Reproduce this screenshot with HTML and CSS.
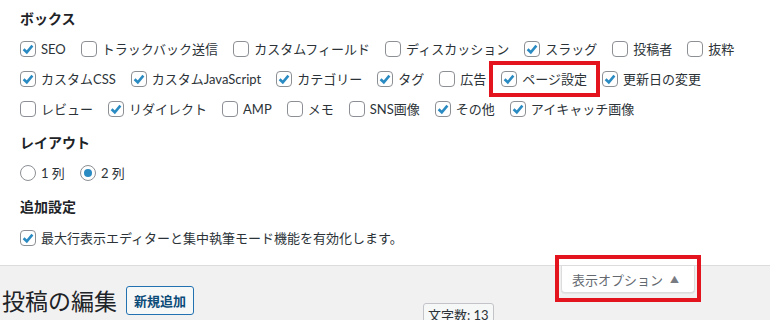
FILE: index.html
```html
<!DOCTYPE html>
<html lang="ja">
<head>
<meta charset="utf-8">
<link rel="stylesheet" href="styles.css">
</head>
<body>
<div class="panel">
  <h5 class="legend">ボックス</h5>
  <div class="row first">
    <label class="opt"><span class="cb on"><svg viewBox="0 0 16 16"><path d="M3.6 8.2 L6.8 11.3 L12.4 4.6"/></svg></span>SEO</label>
    <label class="opt"><span class="cb"></span>トラックバック送信</label>
    <label class="opt"><span class="cb"></span>カスタムフィールド</label>
    <label class="opt"><span class="cb"></span>ディスカッション</label>
    <label class="opt"><span class="cb on"><svg viewBox="0 0 16 16"><path d="M3.6 8.2 L6.8 11.3 L12.4 4.6"/></svg></span>スラッグ</label>
    <label class="opt"><span class="cb"></span>投稿者</label>
    <label class="opt"><span class="cb"></span>抜粋</label>
  </div>
  <div class="row">
    <label class="opt"><span class="cb on"><svg viewBox="0 0 16 16"><path d="M3.6 8.2 L6.8 11.3 L12.4 4.6"/></svg></span>カスタムCSS</label>
    <label class="opt"><span class="cb on"><svg viewBox="0 0 16 16"><path d="M3.6 8.2 L6.8 11.3 L12.4 4.6"/></svg></span>カスタムJavaScript</label>
    <label class="opt"><span class="cb on"><svg viewBox="0 0 16 16"><path d="M3.6 8.2 L6.8 11.3 L12.4 4.6"/></svg></span>カテゴリー</label>
    <label class="opt"><span class="cb on"><svg viewBox="0 0 16 16"><path d="M3.6 8.2 L6.8 11.3 L12.4 4.6"/></svg></span>タグ</label>
    <label class="opt"><span class="cb"></span>広告</label>
    <label class="opt highlight"><span class="cb on"><svg viewBox="0 0 16 16"><path d="M3.6 8.2 L6.8 11.3 L12.4 4.6"/></svg></span>ページ設定</label>
    <label class="opt"><span class="cb on"><svg viewBox="0 0 16 16"><path d="M3.6 8.2 L6.8 11.3 L12.4 4.6"/></svg></span>更新日の変更</label>
  </div>
  <div class="row">
    <label class="opt"><span class="cb"></span>レビュー</label>
    <label class="opt"><span class="cb on"><svg viewBox="0 0 16 16"><path d="M3.6 8.2 L6.8 11.3 L12.4 4.6"/></svg></span>リダイレクト</label>
    <label class="opt"><span class="cb"></span>AMP</label>
    <label class="opt"><span class="cb"></span>メモ</label>
    <label class="opt"><span class="cb"></span>SNS画像</label>
    <label class="opt"><span class="cb on"><svg viewBox="0 0 16 16"><path d="M3.6 8.2 L6.8 11.3 L12.4 4.6"/></svg></span>その他</label>
    <label class="opt"><span class="cb on"><svg viewBox="0 0 16 16"><path d="M3.6 8.2 L6.8 11.3 L12.4 4.6"/></svg></span>アイキャッチ画像</label>
  </div>
  <h5 class="legend second">レイアウト</h5>
  <div class="row radios">
    <label class="opt"><span class="rb"></span>1 列</label>
    <label class="opt"><span class="rb on"></span>2 列</label>
  </div>
  <h5 class="legend second">追加設定</h5>
  <div class="row last">
    <label class="opt"><span class="cb on"><svg viewBox="0 0 16 16"><path d="M3.6 8.2 L6.8 11.3 L12.4 4.6"/></svg></span>最大行表示エディターと集中執筆モード機能を有効化します。</label>
  </div>
</div>
<div class="main">
  <div class="tab-wrap">
    <button class="tab">表示オプション <span class="arrow">▲</span></button>
  </div>
  <div class="wrap">
    <h1 class="title">投稿の編集</h1>
    <a class="add-new">新規追加</a>
  </div>
  <div class="count">文字数: 13</div>
</div>
</body>
</html>
```

FILE: styles.css
```css
html, body {
  margin: 0;
  padding: 0;
}
body {
  background: #f1f1f1;
  font-family: Lato, "Noto Sans CJK JP", sans-serif;
  font-size: 13px;
  color: #2c3338;
  width: 770px;
  height: 320px;
  overflow: hidden;
}
.panel {
  background: #fff;
  border-bottom: 1px solid #dcdcde;
  padding: 8px 20px 12px 20px;
}
.legend {
  margin: 0;
  font-family: "Noto Sans CJK JP", sans-serif;
  font-size: 14px;
  line-height: 20px;
  font-weight: 700;
  color: #1d2327;
}
.legend.second {
  margin-top: 8px;
}
.row {
  display: flex;
  align-items: center;
  height: 30px;
}
.row.first {
  margin-top: 6px;
}
.row.radios {
  margin-top: 6px;
}
.row.last {
  margin-top: 7px;
}
.opt {
  display: flex;
  align-items: center;
  gap: 5px;
  margin-right: 15px;
  white-space: nowrap;
  line-height: 20px;
}
.cb {
  width: 16px;
  height: 16px;
  box-sizing: border-box;
  border: 1px solid #8c8f94;
  border-radius: 4px;
  background: #fff;
  display: inline-flex;
  align-items: center;
  justify-content: center;
  flex: none;
}
.cb svg {
  width: 16px;
  height: 16px;
  margin: -1px;
}
.cb svg path {
  fill: none;
  stroke: #2a8bc2;
  stroke-width: 2.6;
  stroke-linecap: butt;
  stroke-linejoin: miter;
}
.rb {
  width: 16px;
  height: 16px;
  box-sizing: border-box;
  border: 1px solid #8c8f94;
  border-radius: 50%;
  background: #fff;
  display: inline-flex;
  align-items: center;
  justify-content: center;
  flex: none;
}
.rb.on::after {
  content: "";
  width: 8px;
  height: 8px;
  border-radius: 50%;
  background: #2a8bc2;
}
.highlight {
  position: relative;
}
.highlight::after {
  content: "";
  position: absolute;
  left: -12px;
  right: -13px;
  top: -8px;
  bottom: -8px;
  border: 4px solid #e3141d;
  pointer-events: none;
}
.main {
  position: relative;
  height: 54px;
}
.tab-wrap {
  float: right;
  margin-right: 75px;
  position: relative;
}
.tab {
  display: flex;
  align-items: center;
  gap: 7px;
  height: 27px;
  padding: 0 15px 0 10px;
  margin: 0;
  background: #fff;
  border: 1px solid #dcdcde;
  border-top: none;
  border-radius: 0 0 4px 4px;
  box-shadow: 0 1px 1px rgba(0,0,0,0.06);
  font-family: "Noto Sans CJK JP", sans-serif;
  font-size: 13px;
  color: #646970;
}
.arrow {
  font-size: 9px;
  color: #787c82;
}
.tab-wrap::after {
  content: "";
  position: absolute;
  left: -6px;
  right: -6px;
  top: -11px;
  bottom: -9px;
  border: 4px solid #e3141d;
}
.wrap {
  display: flex;
  align-items: center;
  gap: 9px;
  padding: 20px 0 0 2px;
}
.title {
  margin: 0;
  font-family: "Noto Sans CJK JP", sans-serif;
  font-size: 23px;
  font-weight: 400;
  line-height: 29px;
  color: #1d2327;
}
.add-new {
  display: inline-block;
  box-sizing: border-box;
  height: 29px;
  line-height: 27px;
  padding: 0 7px;
  border: 1px solid #2271b1;
  border-radius: 3px;
  background: #f6f7f7;
  color: #0a4b78;
  font-family: "Noto Sans CJK JP", sans-serif;
  font-size: 13px;
  font-weight: 700;
}
.count {
  position: absolute;
  left: 423px;
  top: 37px;
  padding: 0 4px;
  height: 24px;
  line-height: 22px;
  border: 1px solid #c3c4c7;
  border-radius: 3px;
  background: #f6f7f7;
  color: #2c3338;
  font-size: 13px;
}
```
